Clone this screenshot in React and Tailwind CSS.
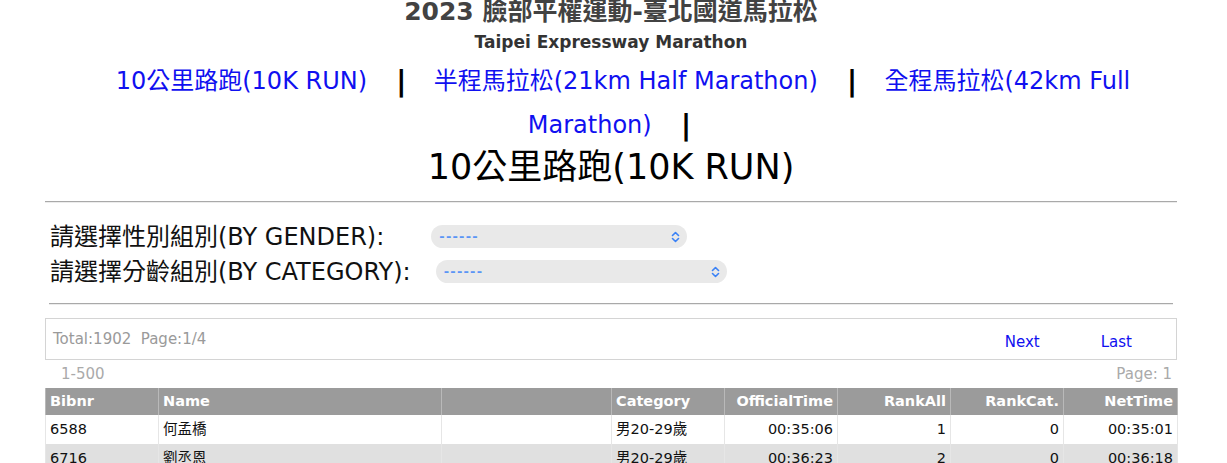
import { Fragment } from "react";

const FONT = "font-['DejaVu_Sans','Noto_Sans_CJK_TC',sans-serif]";

const races = [
  "10公里路跑(10K RUN)",
  "半程馬拉松(21km Half Marathon)",
  "全程馬拉松(42km Full Marathon)",
];

const columns = [
  { key: "bib", label: "Bibnr", width: "w-[113px]", align: "text-left" },
  { key: "name", label: "Name", width: "w-[283px]", align: "text-left" },
  { key: "blank", label: "", width: "w-[170px]", align: "text-left" },
  { key: "cat", label: "Category", width: "w-[113px]", align: "text-left" },
  { key: "official", label: "OfficialTime", width: "w-[113px]", align: "text-right" },
  { key: "rankAll", label: "RankAll", width: "w-[113px]", align: "text-right" },
  { key: "rankCat", label: "RankCat.", width: "w-[113px]", align: "text-right" },
  { key: "net", label: "NetTime", width: "w-[114px]", align: "text-right" },
];

const results = [
  { bib: "6588", name: "何孟橋", blank: "", cat: "男20-29歲", official: "00:35:06", rankAll: "1", rankCat: "0", net: "00:35:01" },
  { bib: "6716", name: "劉丞恩", blank: "", cat: "男20-29歲", official: "00:36:23", rankAll: "2", rankCat: "0", net: "00:36:18" },
];

const UpDown = () => (
  <svg width="9" height="12" viewBox="0 0 9 12" fill="none" stroke="#3b82f6" strokeWidth="1.6" strokeLinecap="round" strokeLinejoin="round">
    <path d="M1.5 4.5 L4.5 1.5 L7.5 4.5" />
    <path d="M1.5 7.5 L4.5 10.5 L7.5 7.5" />
  </svg>
);

const FakeSelect = ({ width }) => (
  <div className={`flex h-[23px] items-center justify-between rounded-full bg-[#e9e9e9] pl-[8px] pr-[7px] ${width}`}>
    <span className="text-[13px] font-bold leading-none tracking-[1.2px] text-[#5b95f5]">------</span>
    <UpDown />
  </div>
);

const Rule = ({ className = "" }) => (
  <div className={`border-t border-b border-t-[#a9a9a9] border-b-[#ececec] ${className}`} />
);

export default function App() {
  return (
    <div className={`min-h-[463px] w-[1227px] overflow-hidden bg-white ${FONT}`}>
      <div className="ml-[45px] w-[1132px]">
        <h1 className="text-center text-[25px] font-bold leading-[24px] text-[#424242]">
          2023 臉部平權運動-臺北國道馬拉松
        </h1>
        <p className="mt-[8px] text-center text-[17px] font-bold leading-[20px] text-[#333]">
          Taipei Expressway Marathon
        </p>

        <div className="mt-[7px] pl-[24px] text-center text-[24px] leading-[44px] text-[#1010f0]">
          {races.map((race) => (
            <Fragment key={race}>
              <a href="#">{race}</a>
              <span className="ml-[29px] mr-[27px] align-[-2px] text-[29px] font-bold text-black">|</span>
            </Fragment>
          ))}
        </div>

        <h2 className="text-center text-[35px] leading-[40px] text-black">10公里路跑(10K RUN)</h2>

        <Rule className="mt-[14px]" />

        <div className="mt-[16px] text-[24px] text-[#111]">
          <div className="flex h-[35px] items-center pl-[5px]">
            <span>請選擇性別組別(BY GENDER):</span>
            <div className="ml-[47px]">
              <FakeSelect width="w-[256px]" />
            </div>
          </div>
          <div className="flex h-[35px] items-center pl-[5px]">
            <span>請選擇分齡組別(BY CATEGORY):</span>
            <div className="ml-[25px]">
              <FakeSelect width="w-[291px]" />
            </div>
          </div>
        </div>

        <Rule className="mx-[4px] mt-[14px]" />

        <div className="mt-[13px] flex h-[42px] items-center border border-[#d4d4d4] pl-[7px] text-[15px]">
          <span className="text-[#9a9a9a]">Total:1902&nbsp;&nbsp;Page:1/4</span>
          <div className="ml-auto mr-[44px] mt-[6px] flex gap-[61px] text-[#1010f0]">
            <a href="#">Next</a>
            <a href="#">Last</a>
          </div>
        </div>

        <div className="flex h-[28px] items-center justify-between pl-[16px] pr-[5px] text-[15px] text-[#aaa]">
          <span>1-500</span>
          <span>Page: 1</span>
        </div>

        <table className="w-full table-fixed border-collapse text-[14.5px]">
          <colgroup>
            {columns.map((c) => (
              <col key={c.key} className={c.width} />
            ))}
          </colgroup>
          <thead>
            <tr className="h-[27px] bg-[#9b9b9b] text-white">
              {columns.map((c) => (
                <th key={c.key} className={`border-x border-[#b9b9b9] px-[4px] font-bold ${c.align}`}>
                  {c.label}
                </th>
              ))}
            </tr>
          </thead>
          <tbody>
            {results.map((r, i) => (
              <tr key={r.bib} className={`h-[29px] ${i % 2 ? "bg-[#e0e0e0]" : "bg-white"} text-[#111]`}>
                {columns.map((c) => (
                  <td key={c.key} className={`border-x border-[#e6e6e6] px-[4px] ${c.align}`}>
                    {r[c.key]}
                  </td>
                ))}
              </tr>
            ))}
          </tbody>
        </table>
      </div>
    </div>
  );
}
